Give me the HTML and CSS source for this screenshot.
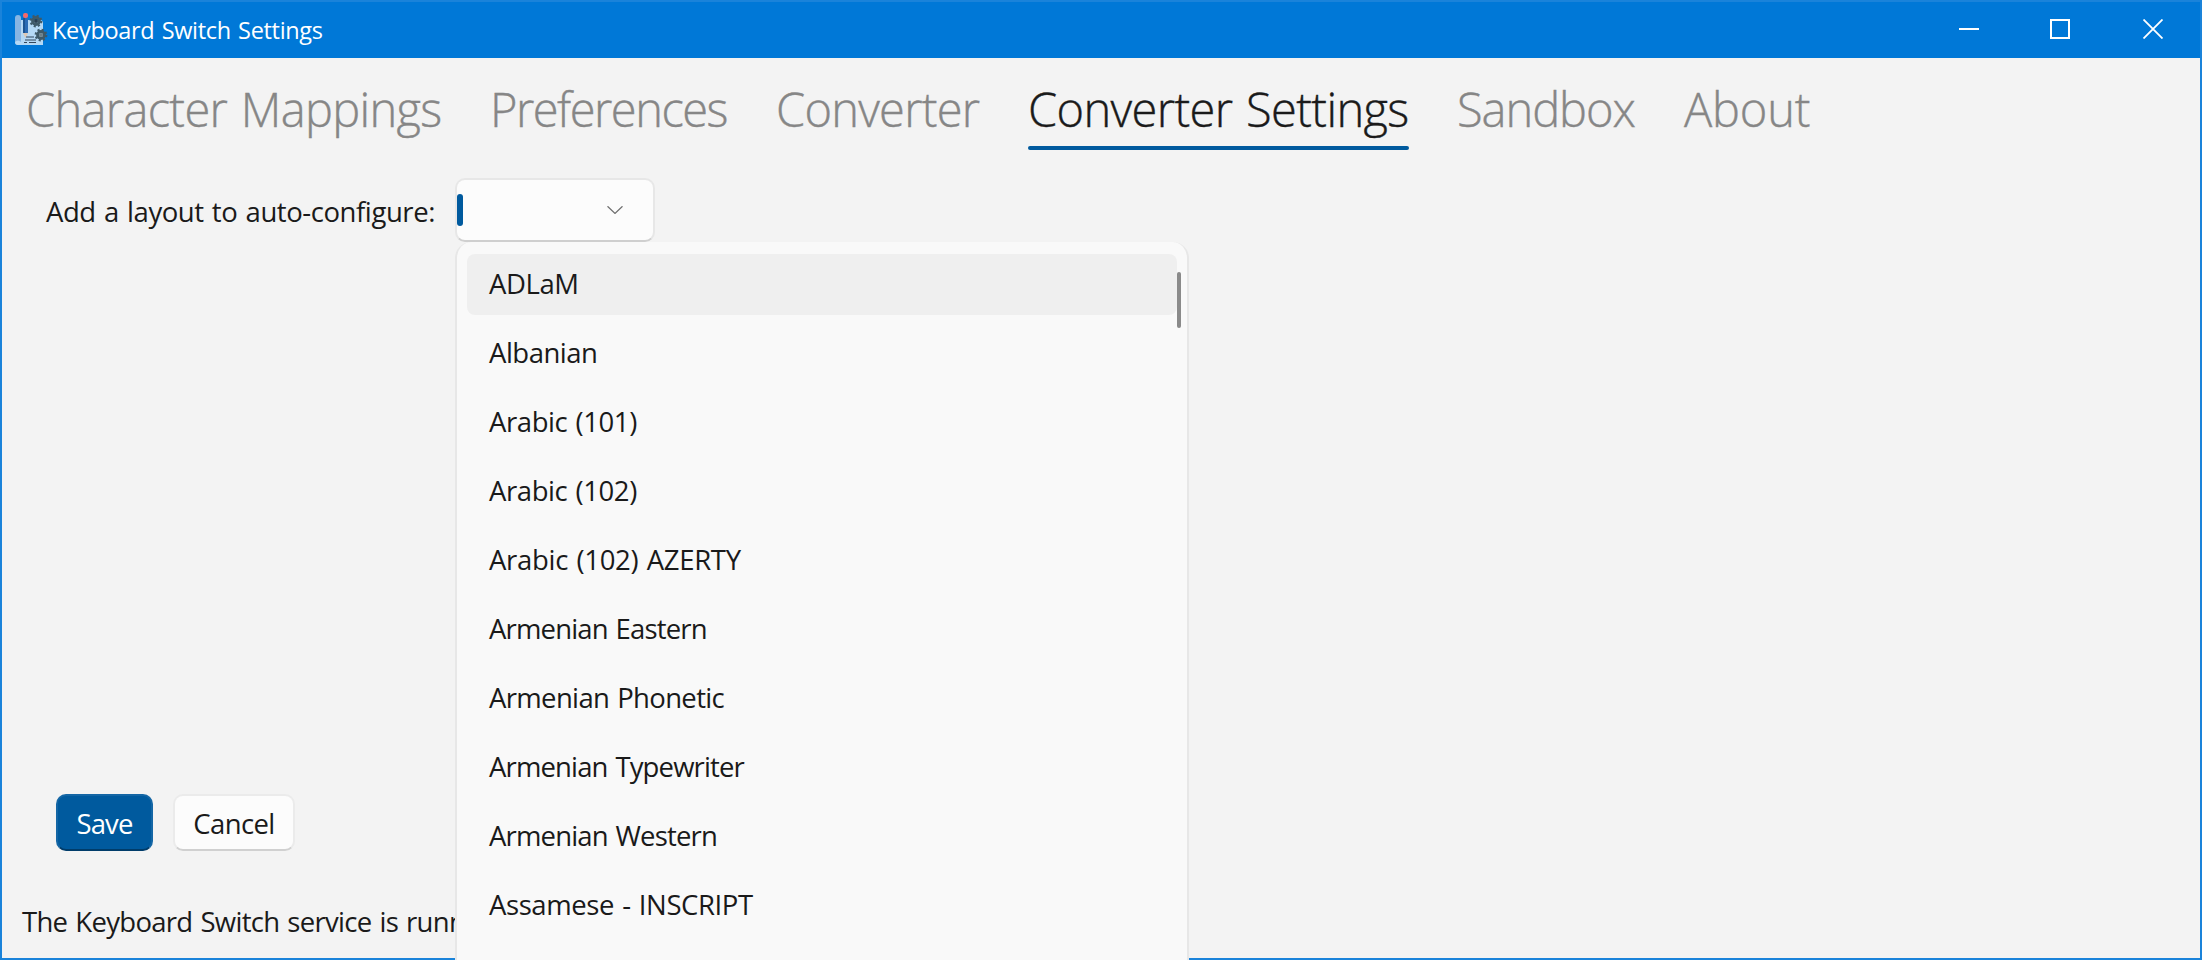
FILE: index.html
```
<!DOCTYPE html>
<html lang="en">
<head>
<meta charset="utf-8">
<title>Keyboard Switch Settings</title>
<link rel="stylesheet" href="styles.css">
</head>
<body>
<div class="window">
  <header class="titlebar">
    <svg class="app-icon" viewBox="0 0 34 34">
      <path d="M4 7h22a3 3 0 0 1 3 3v22H4z" fill="#b5d9f5"/>
      <rect x="1" y="2" width="6" height="30" rx="3" fill="#86b5e3"/>
      <path d="M1 29q3-3 6 0h22v1q0 2-3 2H4q-3 0-3-3z" fill="#b5d9f5"/>
      <path d="M9 5h5v15H9z" fill="#2b6cb5"/>
      <path d="M9 5h2v15H9z" fill="#1c5592"/>
      <path d="M9 20h5l-2.500 5z" fill="#e0c9b4"/>
      <rect x="9" y="0" width="5" height="5" rx="2" fill="#f4696b"/>
      <path d="M12 24h8M11 27h11M10 29.500h3M15 29.500h7" stroke="#33475b" stroke-width="1.100"/>
      <g fill="none" stroke="#3f5a68">
        <circle cx="22" cy="8" r="5.300" stroke-width="2.200" stroke-dasharray="2.080 2.080"/>
        <circle cx="22" cy="8" r="3.400" stroke-width="3"/>
        <circle cx="27" cy="22" r="5.300" stroke-width="2.200" stroke-dasharray="2.080 2.080"/>
        <circle cx="27" cy="22" r="3.400" stroke-width="3"/>
      </g>
      <circle cx="22" cy="8" r="2" fill="#2a3f50"/>
      <circle cx="27" cy="22" r="2" fill="#6b7f88"/>
    </svg>
    <span class="title">Keyboard Switch Settings</span>
    <div class="window-controls">
      <svg viewBox="0 0 20 20"><path d="M0 10h20" stroke="#fff" stroke-width="2"/></svg>
      <svg viewBox="0 0 20 20"><path d="M1 1h18v18H1z" fill="none" stroke="#fff" stroke-width="2"/></svg>
      <svg viewBox="0 0 20 20"><path d="M.500.500l19 19M19.500.500l-19 19" stroke="#fff" stroke-width="1.800"/></svg>
    </div>
  </header>
  <nav class="tabs">
    <a class="tab tab-mappings">Character Mappings</a>
    <a class="tab tab-preferences">Preferences</a>
    <a class="tab tab-converter">Converter</a>
    <a class="tab tab-settings active">Converter Settings</a>
    <a class="tab tab-sandbox">Sandbox</a>
    <a class="tab tab-about">About</a>
  </nav>
  <main class="content">
    <label class="field-label">Add a layout to auto-configure:</label>
    <div class="combo">
      <span class="combo-marker"></span>
      <svg class="chevron" viewBox="0 0 16 8"><path d="M.500.300L8 7.400 15.500.300" fill="none" stroke="#6f6f6f" stroke-width="1.300"/></svg>
      <div class="dropdown">
        <ul class="options">
          <li class="option short selected">ADLaM</li>
          <li class="option medium">Albanian</li>
          <li class="option short">Arabic (101)</li>
          <li class="option short">Arabic (102)</li>
          <li class="option wide">Arabic (102) AZERTY</li>
          <li class="option tight">Armenian Eastern</li>
          <li class="option phonetic">Armenian Phonetic</li>
          <li class="option tightest">Armenian Typewriter</li>
          <li class="option tight">Armenian Western</li>
          <li class="option short">Assamese - INSCRIPT</li>
        </ul>
        <span class="scroll-thumb"></span>
      </div>
    </div>
  </main>
  <div class="actions">
    <button class="button primary">Save</button>
    <button class="button">Cancel</button>
  </div>
  <footer class="status">The Keyboard Switch service is running</footer>
</div>
</body>
</html>
```
FILE: styles.css
```
* { box-sizing: border-box; }

body {
  margin: 0;
  height: 960px;
  overflow: hidden;
  font: 400 27.5px "Open Sans", "Noto Sans", sans-serif;
  word-spacing: 1.5px;
  color: #1a1a1a;
}

.window {
  display: flex;
  flex-direction: column;
  height: 960px;
  background: #f3f3f3;
  border: 2px solid #1a83da;
}

.titlebar {
  display: flex;
  height: 56px;
  flex: none;
  padding-left: 12px;
  background: #0078d7;
  color: #fff;
}

.app-icon {
  width: 34px;
  height: 34px;
  margin-top: 11px;
}

.title {
  margin-left: 4px;
  font-size: 23.5px;
  line-height: 57px;
  letter-spacing: -0.32px;
}

.window-controls {
  display: flex;
  gap: 72px;
  margin: 17px 37px 0 auto;
}

.window-controls svg {
  width: 20px;
  height: 20px;
}

.window-controls svg:first-child { margin-right: -1px; }
.window-controls svg:last-child { margin-left: 1px; }

.tabs {
  display: flex;
  flex: none;
  gap: 48px;
  height: 92px;
  padding-left: 24px;
}

.tab {
  padding-top: 9px;
  font-size: 47px;
  font-weight: 300;
  line-height: 84px;
  word-spacing: 2px;
  -webkit-text-stroke: 0.4px currentColor;
  white-space: nowrap;
  color: #868686;
}

.tab-mappings { width: 416px; letter-spacing: -0.66px; }
.tab-preferences { width: 238px; letter-spacing: -1.5px; }
.tab-converter { width: 204px; letter-spacing: -0.74px; }
.tab-settings { width: 381px; letter-spacing: -0.62px; }
.tab-sandbox { width: 179px; letter-spacing: -1.05px; }
.tab-about { width: 127px; letter-spacing: -0.2px; }

.tab.active {
  position: relative;
  color: #1a1a1a;
}

.tab.active::after {
  content: "";
  position: absolute;
  left: 0;
  right: 0;
  bottom: 0;
  height: 4px;
  border-radius: 2px;
  background: #005a9e;
}

.content {
  display: flex;
  flex: 1;
  padding: 28px 0 0 44px;
}

.field-label {
  width: 409px;
  line-height: 68px;
  letter-spacing: -0.43px;
  white-space: nowrap;
}

.combo {
  position: relative;
  display: flex;
  justify-content: space-between;
  width: 200px;
  height: 64px;
  padding: 14px 30px 0 0;
  background: #fcfcfc;
  border: 2px solid #e7e7e7;
  border-bottom-color: #cfcfcf;
  border-radius: 10px;
}

.combo-marker {
  width: 6px;
  height: 32px;
  border-radius: 3px;
  background: #005a9e;
}

.chevron {
  width: 16px;
  height: 8px;
  margin-top: 12px;
}

.dropdown {
  position: absolute;
  z-index: 1;
  top: 62px;
  left: -2px;
  width: 734px;
  height: 760px;
  padding: 12px 10px;
  background: #f9f9f9;
  border: solid #e7e7e7;
  border-width: 0 2px;
  border-radius: 16px;
}

.options {
  display: flex;
  flex-direction: column;
  gap: 8px;
  margin: 0;
  padding: 0;
  list-style: none;
}

.option {
  height: 61px;
  padding-left: 22px;
  border-radius: 8px;
  line-height: 60px;
}

.selected { background: #efefef; }
.short { letter-spacing: -0.42px; }
.medium { letter-spacing: -0.51px; }
.wide { letter-spacing: -0.3px; }
.phonetic { letter-spacing: -0.66px; }
.tight { letter-spacing: -0.84px; }
.tightest { letter-spacing: -0.86px; }

.scroll-thumb {
  position: absolute;
  top: 30px;
  right: 6px;
  width: 4px;
  height: 56px;
  border-radius: 2px;
  background: #8a8a8a;
}

.actions {
  display: flex;
  gap: 20px;
  padding-left: 54px;
}

.button {
  width: 122px;
  height: 57px;
  padding: 2px 0 0;
  font: inherit;
  line-height: 51px;
  letter-spacing: -0.6px;
  color: #1a1a1a;
  background: #fcfcfc;
  border: 2px solid #ebebeb;
  border-bottom-color: #d0d0d0;
  border-radius: 10px;
}

.primary {
  width: 97px;
  letter-spacing: -0.83px;
  color: #fff;
  background: #005a9e;
  border-color: #1466a5;
  border-bottom-color: #003c6a;
}

.status {
  height: 107px;
  padding: 49px 0 0 20px;
  line-height: 43px;
  letter-spacing: -0.7px;
}
```
